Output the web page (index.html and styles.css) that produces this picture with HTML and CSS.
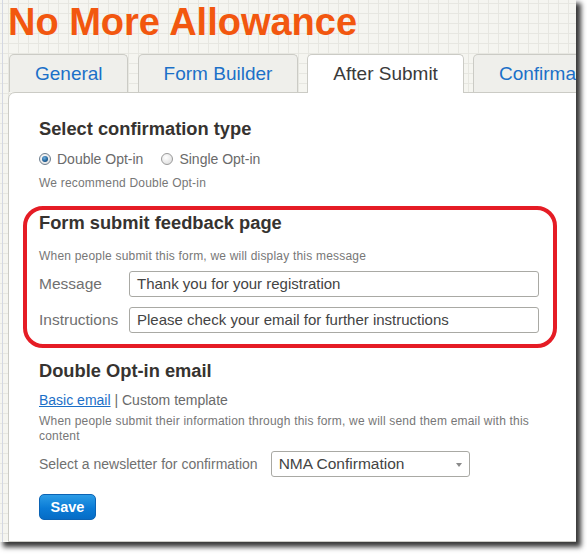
FILE: index.html
```html
<!DOCTYPE html>
<html lang="en">
<head>
<meta charset="utf-8">
<title>No More Allowance</title>
<link rel="stylesheet" href="styles.css">
</head>
<body>
<div class="window">
  <h1 class="title">No More Allowance</h1>
  <ul class="tabs">
    <li class="tab">General</li>
    <li class="tab">Form Builder</li>
    <li class="tab tab-active">After Submit</li>
    <li class="tab">Confirmation</li>
  </ul>
  <div class="panel">
    <div class="panel-inner">
      <h2 class="section-title">Select confirmation type</h2>
      <div class="radio-row">
        <label class="radio-option"><span class="radio radio-checked"></span>Double Opt-in</label>
        <label class="radio-option"><span class="radio"></span>Single Opt-in</label>
      </div>
      <p class="note">We recommend Double Opt-in</p>

      <h2 class="section-title section-gap">Form submit feedback page</h2>
      <p class="note note-gap">When people submit this form, we will display this message</p>
      <div class="field-row">
        <span class="field-label">Message</span>
        <div class="text-input">Thank you for your registration</div>
      </div>
      <div class="field-row field-row-next">
        <span class="field-label">Instructions</span>
        <div class="text-input">Please check your email for further instructions</div>
      </div>

      <h2 class="section-title section-gap-lg">Double Opt-in email</h2>
      <div class="template-links"><a class="link" href="#">Basic email</a> | Custom template</div>
      <p class="note note-para">When people submit their information through this form, we will send them email with this content</p>
      <div class="select-row">
        <span class="select-label">Select a newsletter for confirmation</span>
        <div class="select-box">NMA Confirmation<span class="select-arrow"></span></div>
      </div>
      <button class="save-btn" type="button">Save</button>
    </div>
  </div>
  <div class="highlight"></div>
</div>
</body>
</html>
```
FILE: styles.css
```css
html, body {
  margin: 0;
  padding: 0;
  background: #ffffff;
}

body {
  font-family: "Liberation Sans", Arial, sans-serif;
  width: 587px;
  height: 554px;
  overflow: hidden;
}

.window {
  position: relative;
  width: 576px;
  height: 542px;
  overflow: hidden;
  display: flex;
  flex-direction: column;
  background-color: #f5f5f0;
  background-image:
    linear-gradient(to right, transparent 2px, #d3d7e2 2px, #d3d7e2 3px, transparent 3px),
    linear-gradient(to right, #e7e7e1 1px, transparent 1px),
    linear-gradient(to bottom, #e7e7e1 1px, transparent 1px);
  background-size: 100% 100%, 10px 10px, 10px 10px;
  background-position: 0 0, 8px 3px, 8px 3px;
  background-repeat: no-repeat, repeat, repeat;
  box-shadow: 4px 4px 5px 1px rgba(0, 0, 0, 0.78);
}

.title {
  margin: 0;
  padding-left: 8px;
  font-size: 38px;
  line-height: 44px;
  font-weight: bold;
  color: #f2570f;
  white-space: nowrap;
}

.tabs {
  list-style: none;
  margin: 10px 0 0 9px;
  padding: 0;
  display: flex;
  align-items: flex-end;
  gap: 9px;
  white-space: nowrap;
}

.tab {
  height: 37px;
  padding: 0 25px;
  line-height: 37px;
  font-size: 19px;
  color: #1b70c8;
  background: #efefeb;
  border: 1px solid #cbcbc5;
  border-bottom: none;
  border-radius: 5px 5px 0 0;
  flex-shrink: 0;
}

.tab:first-child {
  margin-right: 1px;
  padding: 0 24px 0 25px;
}

.tab-active {
  background: #ffffff;
  color: #3a3a3a;
  height: 38px;
  margin-bottom: -1px;
  position: relative;
  z-index: 1;
}

.panel {
  flex: 1;
  margin-left: 8px;
  width: 620px;
  background: #ffffff;
  border: 1px solid #cbcbc5;
  border-radius: 7px 0 0 0;
}

.panel-inner {
  width: 500px;
  padding: 25px 0 0 30px;
}

.section-title {
  margin: 0;
  font-size: 18.3px;
  line-height: 21px;
  font-weight: bold;
  color: #363330;
}

.section-gap {
  margin-top: 22px;
}

.section-gap-lg {
  margin-top: 27px;
}

.radio-row {
  margin-top: 11px;
  display: flex;
  font-size: 14px;
  line-height: 18px;
  color: #6a6a6a;
}

.radio-option {
  display: flex;
  align-items: center;
}

.radio-option + .radio-option {
  margin-left: 18px;
}

.radio {
  box-sizing: border-box;
  width: 12px;
  height: 12px;
  margin-right: 6px;
  border-radius: 50%;
  border: 1px solid #9a9a9a;
  background: radial-gradient(circle at 40% 35%, #ffffff 0%, #e4e4e4 70%, #cfcfcf 100%);
  display: flex;
  align-items: center;
  justify-content: center;
}

.radio-checked {
  border-color: #6f7f8f;
}

.radio-checked::after {
  content: "";
  width: 6px;
  height: 6px;
  border-radius: 50%;
  background: radial-gradient(circle at 40% 35%, #6fb0e0 0%, #1f5f95 60%, #0d3a63 100%);
}

.note {
  margin: 8px 0 0;
  font-size: 12px;
  line-height: 14px;
  color: #777777;
  letter-spacing: 0.2px;
}

.note-gap {
  margin-top: 16px;
}

.note-para {
  margin-top: 4.5px;
  line-height: 15px;
}

.field-row {
  margin-top: 8px;
  display: flex;
  align-items: center;
}

.field-row-next {
  margin-top: 10px;
}

.field-label {
  width: 90px;
  flex-shrink: 0;
  font-size: 15.5px;
  color: #707070;
}

.text-input {
  box-sizing: border-box;
  flex: 1;
  height: 26px;
  padding: 0 7px;
  line-height: 24px;
  font-size: 15px;
  color: #444444;
  border: 1px solid #a9a9a4;
  border-radius: 3px;
  background: #ffffff;
  white-space: nowrap;
}

.template-links {
  margin-top: 10px;
  font-size: 14px;
  line-height: 18px;
  color: #6a6a6a;
}

.link {
  color: #1b6fc8;
  text-decoration: underline;
}

.select-row {
  margin-top: 7px;
  display: flex;
  align-items: center;
}

.select-label {
  font-size: 14px;
  color: #707070;
  margin-right: 13px;
}

.select-box {
  position: relative;
  box-sizing: border-box;
  width: 199px;
  height: 26px;
  padding: 0 7px;
  line-height: 24px;
  font-size: 15.5px;
  color: #444444;
  border: 1px solid #a9a9a4;
  border-radius: 3px;
  background: #ffffff;
}

.select-arrow {
  position: absolute;
  right: 7px;
  top: 11px;
  width: 0;
  height: 0;
  border-left: 3.5px solid transparent;
  border-right: 3.5px solid transparent;
  border-top: 4px solid #8a8a8a;
}

.save-btn {
  display: block;
  margin-top: 17.5px;
  box-sizing: border-box;
  width: 57px;
  height: 26px;
  padding: 0;
  font-family: "Liberation Sans", Arial, sans-serif;
  font-size: 14.5px;
  font-weight: bold;
  color: #ffffff;
  border: 1px solid #0b63b4;
  border-radius: 5px;
  background: linear-gradient(to bottom, #2c9ce6 0%, #0a7bd6 55%, #066cc6 100%);
}

.highlight {
  position: absolute;
  left: 23px;
  top: 206px;
  width: 534px;
  height: 142px;
  box-sizing: border-box;
  border: 4px solid #e51c25;
  border-radius: 20px;
  pointer-events: none;
}
```
